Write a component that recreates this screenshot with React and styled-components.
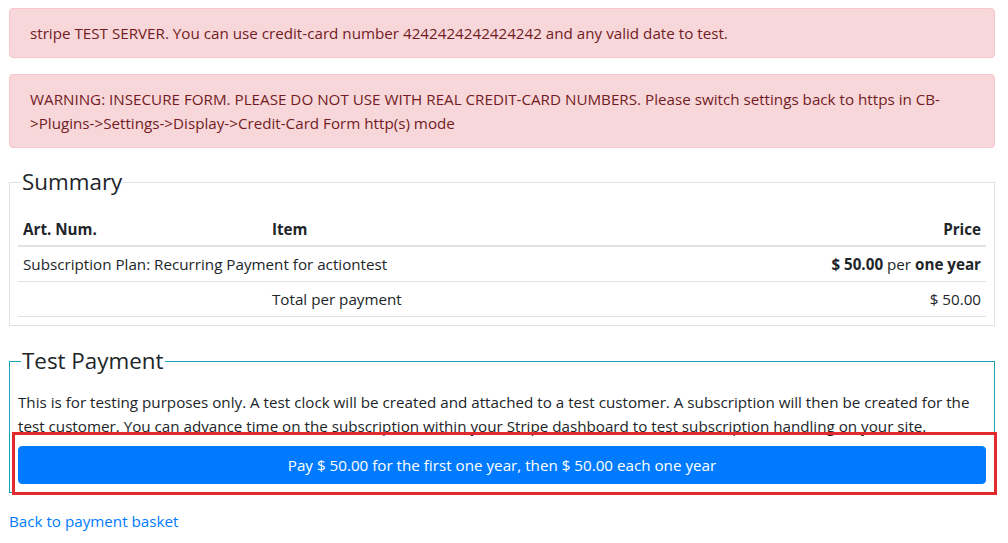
import React from 'react';
import styled, { createGlobalStyle } from 'styled-components';

const GlobalStyle = createGlobalStyle`
    html, body {
        margin: 0;
        padding: 0;
        background: #fff;
    }
    body {
        font-family: 'Open Sans', 'Noto Sans', sans-serif;
        font-size: 15.2px;
        line-height: 24px;
        color: #212529;
    }
    * {
        box-sizing: border-box;
    }
`;

const Page = styled.div`
    padding: 8px 13px 20px 9px;
`;

const Alert = styled.div`
    padding: 12px 20px;
    margin-bottom: 16px;
    border: 1px solid #f5c6cb;
    border-radius: 4px;
    background-color: #f8d7da;
    color: #721c24;
`;

const Fieldset = styled.fieldset`
    margin: 0 0 ${(p) => (p.$accent ? '16px' : '17px')};
    padding: 0 8px 8px;
    border: 1px solid ${(p) => (p.$accent ? '#17a2b8' : '#dee2e6')};
    min-width: 0;
`;

const Legend = styled.legend`
    margin-left: 3px;
    padding: 0 1px;
    font-size: 22.4px;
    line-height: 36px;
    font-weight: 400;
    color: #212529;
`;

const Table = styled.table`
    width: 100%;
    margin-top: 12px;
    border-collapse: collapse;
`;

const Th = styled.th`
    padding: 5px 5px 4px;
    text-align: ${(p) => (p.$right ? 'right' : 'left')};
    font-weight: 700;
    border-bottom: 2px solid #dee2e6;
    width: ${(p) => p.$width || 'auto'};
    vertical-align: bottom;
`;

const Td = styled.td`
    padding: 5px 5px;
    text-align: ${(p) => (p.$right ? 'right' : 'left')};
    border-bottom: 1px solid #dee2e6;
    white-space: nowrap;
`;

const Text = styled.p`
    margin: 11px 0 8px;
`;

const PayWrap = styled.div`
    position: relative;

    /* red highlight drawn over the button */
    &::after {
        content: '';
        position: absolute;
        top: -14px;
        left: -6px;
        right: -11px;
        bottom: -11px;
        border: 3px solid #e32a2f;
        pointer-events: none;
    }
`;

const PayButton = styled.button`
    display: block;
    width: 100%;
    padding: 6px 12px;
    border: 1px solid #007bff;
    border-radius: 4px;
    background-color: #007bff;
    color: #fff;
    font-family: inherit;
    font-size: inherit;
    line-height: 24px;
    text-align: center;
    cursor: pointer;
`;

const BackLink = styled.a`
    display: inline-block;
    color: #007bff;
    text-decoration: none;
`;

const App = () => {
    return (
        <>
            <GlobalStyle />
            <Page>
                <Alert>
                    stripe TEST SERVER. You can use credit-card number 4242424242424242 and any
                    valid date to test.
                </Alert>
                <Alert>
                    WARNING: INSECURE FORM. PLEASE DO NOT USE WITH REAL CREDIT-CARD NUMBERS. Please
                    switch settings back to https in CB-&gt;Plugins-&gt;Settings-&gt;Display-&gt;Credit-Card
                    Form http(s) mode
                </Alert>

                <Fieldset>
                    <Legend>Summary</Legend>
                    <Table>
                        <thead>
                            <tr>
                                <Th $width="249px">Art. Num.</Th>
                                <Th>Item</Th>
                                <Th $right>Price</Th>
                            </tr>
                        </thead>
                        <tbody>
                            <tr>
                                <Td colSpan={2}>Subscription Plan: Recurring Payment for actiontest</Td>
                                <Td $right>
                                    <b>$ 50.00</b> per <b>one year</b>
                                </Td>
                            </tr>
                            <tr>
                                <Td></Td>
                                <Td>Total per payment</Td>
                                <Td $right>$ 50.00</Td>
                            </tr>
                        </tbody>
                    </Table>
                </Fieldset>

                <Fieldset $accent>
                    <Legend>Test Payment</Legend>
                    <Text>
                        This is for testing purposes only. A test clock will be created and attached to
                        a test customer. A subscription will then be created for the test customer. You
                        can advance time on the subscription within your Stripe dashboard to test
                        subscription handling on your site.
                    </Text>
                    <PayWrap>
                        <PayButton type="button">
                            Pay $ 50.00 for the first one year, then $ 50.00 each one year
                        </PayButton>
                    </PayWrap>
                </Fieldset>

                <BackLink href="#">Back to payment basket</BackLink>
            </Page>
        </>
    );
};

export default App;
